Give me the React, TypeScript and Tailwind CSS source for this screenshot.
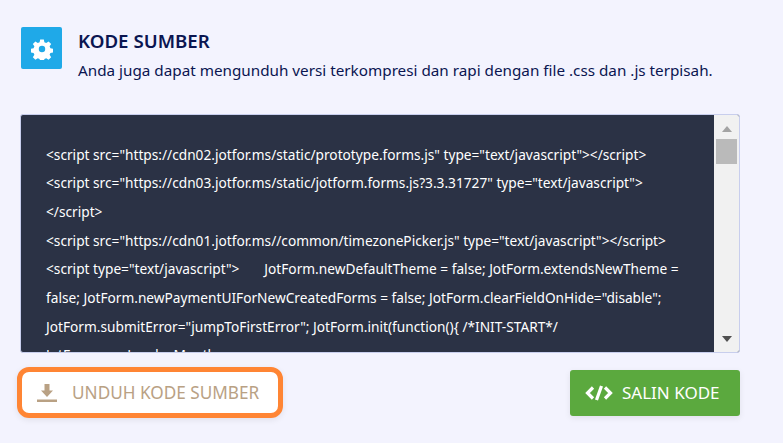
import React from "react";

const lines = [
  '<script src="https://cdn02.jotfor.ms/static/prototype.forms.js" type="text/javascript"></script>',
  '<script src="https://cdn03.jotfor.ms/static/jotform.forms.js?3.3.31727" type="text/javascript">',
  "</script>",
  '<script src="https://cdn01.jotfor.ms//common/timezonePicker.js" type="text/javascript"></script>',
  '<script type="text/javascript">\u00a0\u00a0\u00a0\u00a0\u00a0\u00a0\u00a0JotForm.newDefaultTheme = false; JotForm.extendsNewTheme =',
  'false; JotForm.newPaymentUIForNewCreatedForms = false; JotForm.clearFieldOnHide="disable";',
  'JotForm.submitError="jumpToFirstError"; JotForm.init(function(){ /*INIT-START*/',
  "JotForm.newLoader.Mouth",
];

export default function App() {
  return (
    <div className="w-[783px] h-[443px] overflow-hidden bg-[#f3f3fe] pl-5 pt-[27px] font-['Noto_Sans',sans-serif]">
      <div className="w-[720px]">
        <div className="flex">
          <div className="ml-px w-[41px] h-[42px] rounded-[2px] bg-[#1fa9e8] flex items-center justify-center">
            <svg width="22" height="22" viewBox="0 0 24 24" fill="#fff" className="mt-px">
              <path fillRule="evenodd" d="M10 1.500h4l.6 3 2 .9 2.600-1.700 2.800 2.800-1.700 2.600.9 2 3 .6v4l-3 .6-.9 2 1.700 2.600-2.800 2.800-2.600-1.700-2 .9-.6 3h-4l-.6-3-2-.9-2.600 1.700-2.800-2.800 1.700-2.600-.9-2-3-.6v-4l3-.6.9-2-1.700-2.600 2.800-2.800 2.600 1.700 2-.9zM12 8.500a3.500 3.500 0 1 0 0 7 3.500 3.500 0 0 0 0-7z" />
            </svg>
          </div>
          <div className="ml-4 text-[#0a1551]">
            <div className="text-[18.700px] leading-[28px] font-semibold whitespace-nowrap">KODE SUMBER</div>
            <div className="text-[15.250px] leading-[30px] whitespace-nowrap">
              Anda juga dapat mengunduh versi terkompresi dan rapi dengan file .css dan .js terpisah.
            </div>
          </div>
        </div>

        <div className="mt-[29px] h-[239px] flex overflow-hidden rounded-[3px] border border-[#c8ceed] bg-[#2b3245]">
          <div className="flex-1 overflow-hidden pl-[25px] pt-[25.500px] text-[13.700px] leading-[28.700px] text-white">
            {lines.map((l, i) => (
              <div key={i} className="whitespace-nowrap">{l}</div>
            ))}
          </div>
          <div className="w-[25px] bg-[#f1f1f1] flex flex-col items-center">
            <div className="mt-[11px] w-0 h-0 border-x-[5px] border-x-transparent border-b-[6px] border-b-[#a3a3a3]" />
            <div className="mt-[7px] w-[21px] h-[25px] bg-[#bababa]" />
            <div className="mt-auto mb-[10px] w-0 h-0 border-x-[5px] border-x-transparent border-t-[6px] border-t-[#505050]" />
          </div>
        </div>

        <div className="mt-[14px] flex items-center justify-between">
          <div className="-ml-[3px] w-[266px] h-[51px] rounded-[12px] border-[5px] border-[#ff8534] bg-white shadow-[0_2px_6px_rgba(0,0,0,0.08)] flex items-center pl-[15px]">
            <svg width="20" height="20" viewBox="0 0 20 20" fill="#b9a184">
              <path d="M7.500 1h5v6.500h3.500L10 14 4 7.500h3.500z" />
              <rect x="0" y="16.500" width="20" height="2.500" />
            </svg>
            <span className="ml-[15px] text-[17.200px] text-[#b9a184] whitespace-nowrap">UNDUH KODE SUMBER</span>
          </div>
          <div className="w-[170px] h-[46px] rounded-[3px] bg-[#5ba93e] shadow-[0_2px_6px_rgba(0,0,0,0.08)] flex items-center pl-[15px]">
            <svg width="28" height="18" viewBox="0 0 28 18" fill="none" stroke="#fff" strokeWidth="3.200">
              <path d="M8 3.500 2.500 9 8 14.500M20 3.500 25.500 9 20 14.500M16.500 2l-5 14" />
            </svg>
            <span className="ml-[9px] text-[17px] text-white whitespace-nowrap">SALIN KODE</span>
          </div>
        </div>
      </div>
    </div>
  );
}
